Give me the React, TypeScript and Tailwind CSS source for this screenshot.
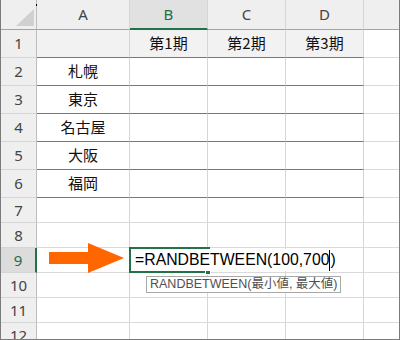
import React from 'react';

const cols = ['A', 'B', 'C', 'D', ''];
const cities = ['札幌', '東京', '名古屋', '大阪', '福岡'];
const periods = ['第1期', '第2期', '第3期'];

const hdrFont = { fontFamily: '"Noto Sans", "Liberation Sans", sans-serif' };
const jpFont = { fontFamily: '"Noto Sans CJK JP", "Noto Sans", sans-serif' };

function RowHeader({ n }: { n: number }) {
  const active = n === 9;
  return (
    <div
      style={hdrFont}
      className={`flex items-center justify-center text-[15px] border-b border-[#d5d5d5] ${
        active
          ? 'bg-[#dcdcdc] text-[#1e6e42] border-r-2 border-r-[#217346]'
          : 'bg-[#efefef] text-[#444] border-r border-r-[#bdbdbd]'
      }`}
    >
      {n}
    </div>
  );
}

export default function App() {
  const rows = Array.from({ length: 12 }, (_, i) => i + 1);

  return (
    <div className="relative w-[400px] h-[340px] overflow-hidden bg-white border-l border-r border-b border-[#7b7b7b]">
      <div className="grid grid-cols-[36px_93px_78px_78px_78px_35px] grid-rows-[30px_repeat(6,28px)_repeat(6,25px)]">
        {/* corner */}
        <div className="relative bg-[#efefef] border-r border-r-[#bdbdbd] border-b border-b-[#a3a3a3]">
          <svg className="absolute left-[15px] top-[9px]" width="18" height="17" viewBox="0 0 18 17">
            <polygon points="0,17 18,0 18,17" fill="#d0d0d0" />
          </svg>
        </div>
        {cols.map((c, i) => (
          <div
            key={i}
            style={hdrFont}
            className={`flex items-center justify-center text-[15px] ${
              c === 'B'
                ? 'bg-[#e1e1e1] text-[#1e6e42] border-b-2 border-b-[#217346]'
                : 'bg-[#efefef] text-[#444] border-b border-b-[#a3a3a3]'
            } ${i < 4 ? 'border-r border-r-[#d5d5d5]' : ''}`}
          >
            {c}
          </div>
        ))}

        {rows.map((n) => (
          <React.Fragment key={n}>
            <RowHeader n={n} />
            {cols.map((_, ci) => {
              const inTable = n <= 6 && ci < 4;
              let text = '';
              if (n === 1 && ci >= 1 && ci <= 3) text = periods[ci - 1];
              if (n >= 2 && n <= 6 && ci === 0) text = cities[n - 2];
              return (
                <div
                  key={ci}
                  style={jpFont}
                  className={`flex items-center justify-center text-[15px] text-[#111] ${
                    inTable ? 'border-b border-b-[#777]' : 'border-b border-b-[#dadada]'
                  } ${ci < 4 ? 'border-r border-r-[#d6d6d6]' : ''} ${
                    n === 1 && ci < 4 ? 'bg-[#f2f2f2]' : ''
                  }`}
                >
                  {text}
                </div>
              );
            })}
          </React.Fragment>
        ))}
      </div>

      {/* stray dot */}
      <span className="absolute left-[35px] top-[4px] w-px h-[2px] bg-black" />

      {/* orange arrow */}
      <svg className="absolute left-[48px] top-[242px]" width="76" height="32" viewBox="0 0 76 32">
        <rect x="0" y="10" width="41" height="12" fill="#ff6600" />
        <polygon points="39,1 75,16 39,31" fill="#ff6600" />
      </svg>

      {/* selected cell B9 */}
      <div className="absolute left-[128px] top-[247px] w-[81px] h-[26px] border-2 border-[#217346]" />
      <div className="absolute left-[204px] top-[269px] w-[6px] h-[6px] bg-[#217346] border border-white" />

      {/* in-cell editor */}
      <div
        className="absolute left-[130px] top-[249px] w-[210px] h-[22px] bg-white flex items-center pl-[4px] text-[15.8px] text-black whitespace-nowrap"
        style={{ fontFamily: '"Liberation Sans", Arial, sans-serif' }}
      >
        =RANDBETWEEN(100,700
        <span className="inline-block w-px h-[21px] bg-black" />
        )
      </div>

      {/* function tooltip */}
      <div
        className="absolute left-[145px] top-[276px] w-[195px] h-[17px] bg-white border border-[#a8a8a8] flex items-center px-[3px] text-[12.5px] text-[#505050] whitespace-nowrap"
        style={{ fontFamily: '"Liberation Sans", "Noto Sans CJK JP", sans-serif' }}
      >
        RANDBETWEEN(最小値, 最大値)
      </div>
    </div>
  );
}
